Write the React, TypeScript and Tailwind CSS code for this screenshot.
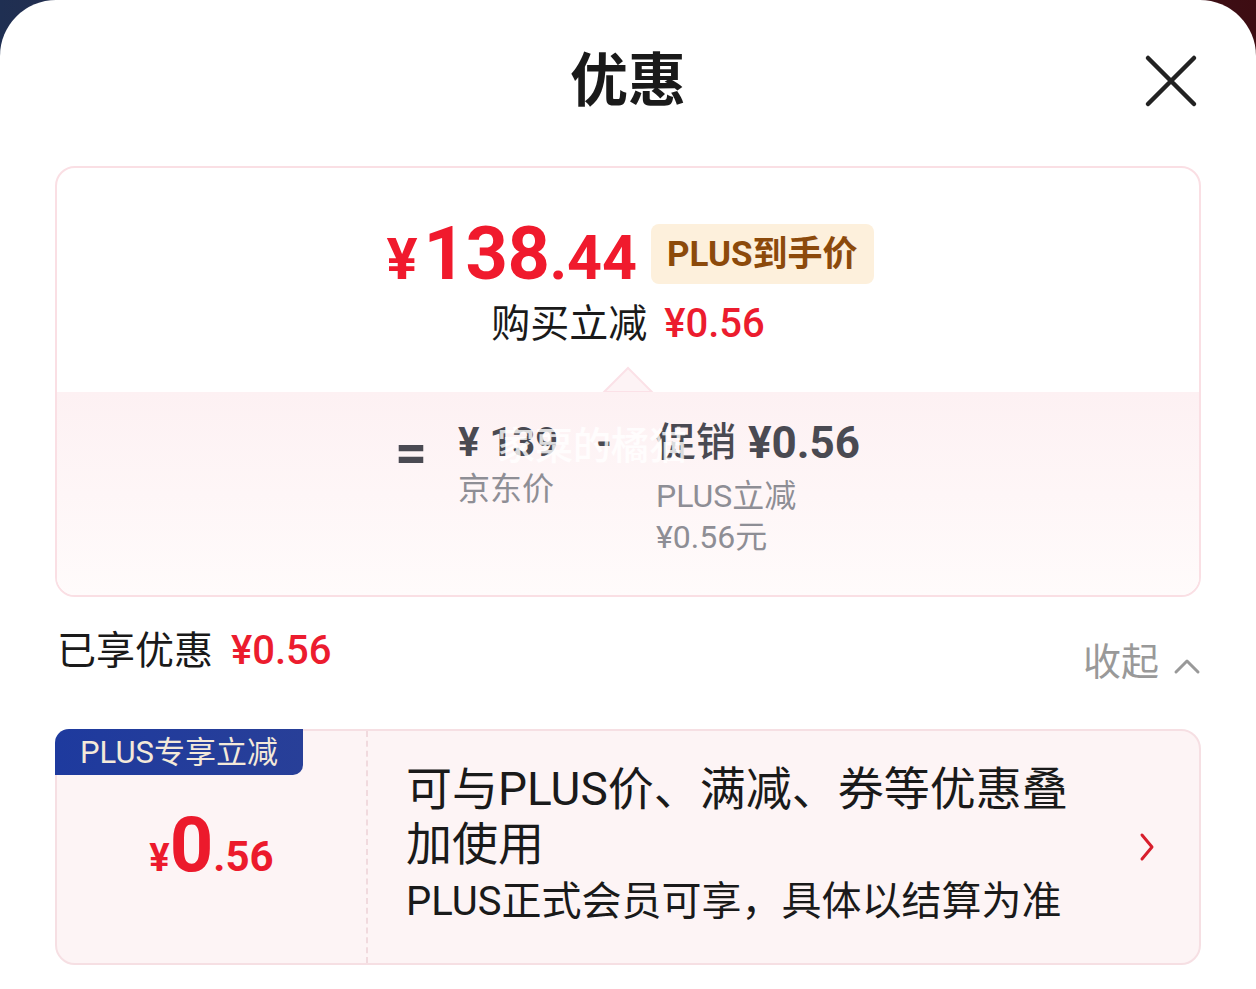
import React from "react";

const CJK = "font-['Roboto','Noto_Sans_CJK_SC',sans-serif]";
const NUM = "font-['Roboto','Noto_Sans_CJK_SC',sans-serif]";

export default function App() {
  return (
    <div className="w-[1256px] h-[989px] overflow-hidden bg-gradient-to-r from-[#1f2f52] via-[#3a2333] to-[#3d0c12]">
      <div className={`h-full bg-white rounded-t-[56px] px-[55px] ${CJK}`}>
        {/* header */}
        <div className="grid grid-cols-[1fr_auto_1fr] items-center h-[166px]">
          <div />
          <div className="text-[58px] font-bold leading-none text-[#1a1a1a] -mt-[4px]">优惠</div>
          <div className="flex justify-end pr-[3px] -mt-[4px]">
            <svg width="54" height="54" viewBox="0 0 54 54">
              <path d="M4 4 L50 50 M50 4 L4 50" stroke="#222" strokeWidth="4.5" strokeLinecap="round" fill="none" />
            </svg>
          </div>
        </div>

        {/* summary card */}
        <div className="border-2 border-[#fadfe4] rounded-[20px] overflow-hidden">
          <div className="h-[224px] flex flex-col items-center pt-[49px]">
            <div className="flex items-center gap-[14px] pl-[4px]">
              <div className={`flex items-baseline text-[#f01a2d] font-bold leading-none ${NUM}`}>
                <span className="text-[58px] mr-[6px]">¥</span>
                <span className="text-[74px] tracking-[-0.5px]">138</span>
                <span className="text-[61px]">.44</span>
              </div>
              <div className="h-[60px] px-[16px] flex items-center rounded-[8px] bg-[#fdf0dc] text-[#8c4a0b] font-bold text-[35px] leading-none">
                PLUS到手价
              </div>
            </div>
            <div className="flex items-center gap-[17px] mt-[13px] leading-none">
              <span className="text-[39px] text-[#1a1a1a]">购买立减</span>
              <span className={`text-[40px] text-[#ec1c2e] font-medium ${NUM}`}>¥0.56</span>
            </div>
            <svg className="mt-auto" width="52" height="26" viewBox="0 0 52 26">
              <path d="M2 26 L26 2 L50 26 Z" fill="#fdf3f5" stroke="#fbe1e7" strokeWidth="2" />
            </svg>
          </div>
          <div className="relative h-[203px] bg-gradient-to-b from-[#fdf1f3] to-[#fffbfb] flex justify-center pt-[27px] pl-[10px]">
            <div className={`text-[56px] leading-[48px] mt-[10px] font-bold text-[#4a4a52] w-[63px] ${NUM}`}>=</div>
            <div className="flex flex-col w-[138px]">
              <div className={`text-[40px] leading-[48px] font-bold text-[#4a4a52] ${NUM}`}>¥ 139</div>
              <div className="text-[32px] leading-[41px] mt-[2px] text-[#8e8e95]">京东价</div>
            </div>
            <div className={`text-[40px] leading-[48px] font-bold text-[#4a4a52] w-[60px] ${NUM}`}>-</div>
            <div className="flex flex-col w-[215px]">
              <div className="flex items-center gap-[12px] h-[48px] text-[#4a4a52]">
                <span className="text-[40px] font-medium leading-none">促销</span>
                <span className={`text-[44px] font-bold leading-none ${NUM}`}>¥0.56</span>
              </div>
              <div className="text-[32px] leading-[41px] mt-[9px] text-[#8e8e95]">PLUS立减</div>
              <div className="text-[32px] leading-[41px] text-[#8e8e95]">¥0.56元</div>
            </div>
            <div className="absolute left-[440px] top-[30px] text-[38px] leading-[48px] text-white/80 font-medium pointer-events-none">
              家粟的橘猫
            </div>
          </div>
        </div>

        {/* enjoyed row */}
        <div className="flex justify-between items-start mt-[30px] pl-[2px] h-[59px]">
          <div className="flex items-center gap-[18px] h-[48px]">
            <span className="text-[39px] text-[#1a1a1a] leading-none">已享优惠</span>
            <span className={`text-[40px] text-[#ec1c2e] font-medium leading-none ${NUM}`}>¥0.56</span>
          </div>
          <div className="flex items-center gap-[14px] pt-[11px] h-[59px]">
            <span className="text-[38px] leading-none text-[#999]">收起</span>
            <svg width="28" height="18" viewBox="0 0 28 18" className="mt-[8px]">
              <path d="M3 15 L14 4 L25 15" stroke="#999" strokeWidth="3" fill="none" strokeLinecap="round" strokeLinejoin="round" />
            </svg>
          </div>
        </div>

        {/* coupon card */}
        <div className="mt-[43px] h-[236px] border-2 border-[#f6dfe3] bg-[#fdf4f5] rounded-[20px] flex">
          <div className="w-[309px] flex flex-col">
            <div className="-mt-[2px] -ml-[2px] self-start h-[46px] w-[248px] flex items-center justify-center rounded-tl-[14px] rounded-br-[10px] bg-gradient-to-r from-[#1e3a9e] to-[#283f98] text-[#f3e9d9] text-[31px] leading-none">
              PLUS专享立减
            </div>
            <div className={`mt-[32px] flex items-baseline justify-center text-[#ec1a2c] font-bold leading-none ${NUM}`}>
              <span className="text-[38px]">¥</span>
              <span className="text-[76px]">0</span>
              <span className="text-[42px]">.56</span>
            </div>
          </div>
          <div className="border-l-2 border-dashed border-[#f1dade]" />
          <div className="flex-1 flex items-center pl-[38px] pr-[43px]">
            <div className="flex-1 flex flex-col -mt-[6px]">
              <div className="max-w-[690px] text-[46px] leading-[55px] text-[#1a1a1a]">
                可与PLUS价、满减、券等优惠叠加使用
              </div>
              <div className="mt-[6px] text-[40px] leading-[48px] text-[#1a1a1a]">
                PLUS正式会员可享，具体以结算为准
              </div>
            </div>
            <svg width="18" height="30" viewBox="0 0 18 30">
              <path d="M4 3 L14 15 L4 27" stroke="#d81e2c" strokeWidth="3" fill="none" strokeLinecap="round" strokeLinejoin="round" />
            </svg>
          </div>
        </div>
      </div>
    </div>
  );
}
